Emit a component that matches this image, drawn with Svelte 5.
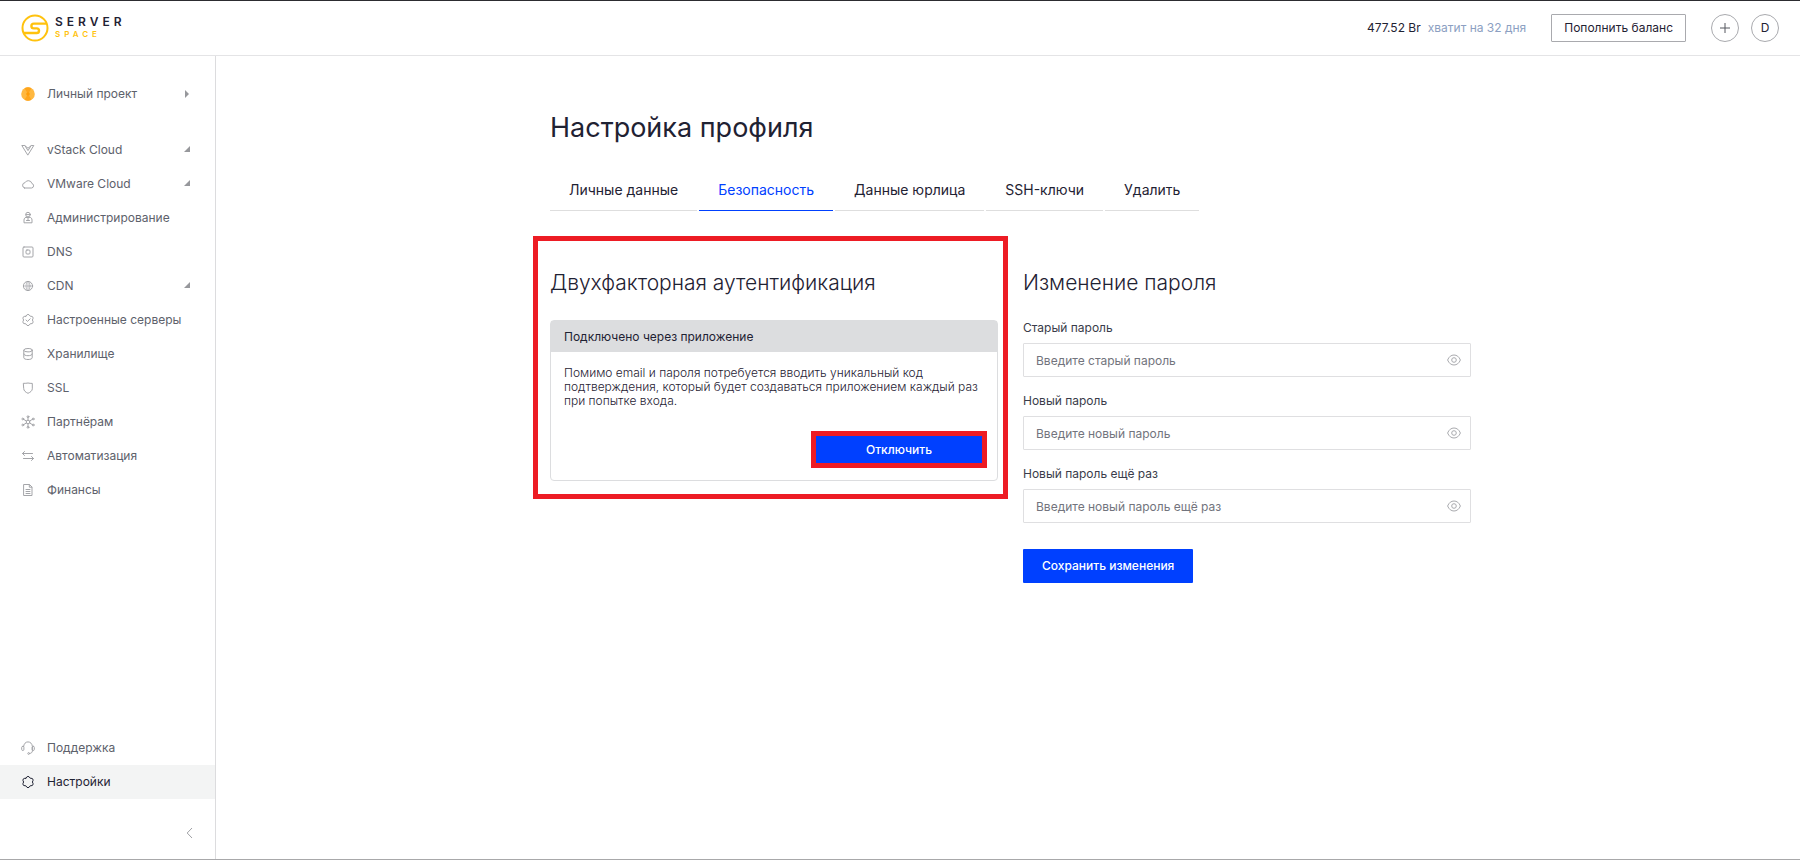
<script>
  const services = [
    { label: 'vStack Cloud', icon: 'vstack', expandable: true },
    { label: 'VMware Cloud', icon: 'cloud', expandable: true },
    { label: 'Администрирование', icon: 'admin' },
    { label: 'DNS', icon: 'dns' },
    { label: 'CDN', icon: 'globe', expandable: true },
    { label: 'Настроенные серверы', icon: 'check' },
    { label: 'Хранилище', icon: 'storage' },
    { label: 'SSL', icon: 'shield' },
    { label: 'Партнёрам', icon: 'partners' },
    { label: 'Автоматизация', icon: 'arrows' },
    { label: 'Финансы', icon: 'doc' }
  ];
  const bottomLinks = [
    { label: 'Поддержка', icon: 'headset' },
    { label: 'Настройки', icon: 'gear', active: true }
  ];
  const tabs = ['Личные данные', 'Безопасность', 'Данные юрлица', 'SSH-ключи', 'Удалить'];
  const fields = [
    { id: 'old-password', label: 'Старый пароль', placeholder: 'Введите старый пароль' },
    { id: 'new-password', label: 'Новый пароль', placeholder: 'Введите новый пароль' },
    { id: 'repeat-password', label: 'Новый пароль ещё раз', placeholder: 'Введите новый пароль ещё раз' }
  ];
  const gearPath = 'M4.8 3.2Q7-.6 9.2 3.2 13.6 3.2 11.400 7 13.600 10.800 9.200 10.800 7 14.600 4.800 10.800.4 10.800 2.600 7 .4 3.200 4.800 3.200z';
  let activeTab = $state('Безопасность');
  let visible = $state({});
</script>

{#snippet icon(name)}
  <svg class="icon" viewBox="0 0 14 14" aria-hidden="true">
    {#if name === 'vstack'}
      <path d="M1.200 2.500h2.600L7 7.600l3.200-5.100h2.600L7 11.800z" /><path d="M4 2.800l3 2.400 3-2.400" />
    {:else if name === 'cloud'}
      <path d="M3.600 11h7a2.300 2.300 0 0 0 .3-4.500A3.700 3.700 0 0 0 4 5.700 2.700 2.700 0 0 0 3.600 11z" />
    {:else if name === 'admin'}
      <circle cx="7" cy="3.600" r="2.300" /><path d="M4.900 6.400h4.200c1 0 1.900 1.200 1.900 2.600v2.800H3V9c0-1.400.9-2.600 1.900-2.600zM7 6.400v3.200M5.500 9.500h3M5 3.600h4" />
    {:else if name === 'dns'}
      <rect x="2" y="2" width="10" height="10" rx="1" /><rect x="5" y="5" width="4" height="4" rx="1" />
    {:else if name === 'globe'}
      <circle cx="7" cy="7" r="4.600" /><ellipse cx="7" cy="7" rx="2" ry="4.600" stroke-width=".7" /><path d="M2.500 7h9M7 2.500v9" stroke-width=".7" />
    {:else if name === 'check'}
      <path d={gearPath} /><path d="M5 7l1.500 1.400L9.200 5.800" />
    {:else if name === 'storage'}
      <ellipse cx="7" cy="3.200" rx="4.200" ry="1.700" /><path d="M2.800 3.200v7.600c0 1 1.900 1.700 4.200 1.700s4.200-.7 4.200-1.700V3.200M2.800 7c0 1 1.900 1.700 4.200 1.700S11.200 8 11.200 7" />
    {:else if name === 'shield'}
      <path d="M2.700 2.400c1.400.3 2.900-.4 4.300-.4s2.900.7 4.300.4v5.400c0 2-2 3.500-4.300 4.500-2.300-1-4.300-2.500-4.300-4.500z" />
    {:else if name === 'partners'}
      <circle cx="7" cy="7" r="1.800" /><path d="M7 2.500v2.700M7 8.800v2.700M5.400 6L2.500 4.300M8.600 6l2.900-1.700M5.400 8L2.500 9.700M8.600 8l2.900 1.700" />
      <circle cx="7" cy="1.700" r=".9" /><circle cx="7" cy="12.300" r=".9" /><circle cx="1.800" cy="4" r=".9" /><circle cx="12.200" cy="4" r=".9" /><circle cx="1.800" cy="10" r=".9" /><circle cx="12.200" cy="10" r=".9" />
    {:else if name === 'arrows'}
      <path d="M11.500 4.500h-10M3.500 2.500l-2 2 2 2M2.500 9.500h10M10.500 7.500l2 2-2 2" />
    {:else if name === 'doc'}
      <path d="M3 1.500h5.500L11 4v8.500H3zM8.300 1.700v2.500h2.500M5 6.500h4M5 8.500h4M5 10.500h4" />
    {:else if name === 'headset'}
      <path d="M2.600 5.500C2.900 2.700 4.600.9 7 .9s4.100 1.800 4.400 4.600v4.300c0 1.700-1.200 2.600-2.900 2.700" />
      <rect x=".7" y="5.300" width="2.200" height="4.200" rx="1.100" /><rect x="11.100" y="5.300" width="2.200" height="4.200" rx="1.100" /><circle cx="7.700" cy="12.500" r=".9" />
    {:else if name === 'gear'}
      <path d={gearPath} />
    {/if}
  </svg>
{/snippet}

<div class="page">
  <header>
    <a class="logo" href="#home" aria-label="Serverspace">
      <svg viewBox="0 0 28 28" aria-hidden="true">
        <circle cx="14" cy="14" r="12.500" />
        <path d="M25.700 9.600H12.800a2.400 2.400 0 0 0 0 4.800h2.900a2.300 2.300 0 0 1 0 4.600H2.700" stroke-width="2.400" />
      </svg>
      <span class="wordmark"><span>SERVER</span><span class="space">SPACE</span></span>
    </a>
    <div class="account">
      <span class="balance"><b>477.52 Br</b><span>хватит на 32 дня</span></span>
      <button class="topup">Пополнить баланс</button>
      <div class="rounds">
        <button class="round" aria-label="Создать">
          <svg viewBox="0 0 12 12" aria-hidden="true"><path d="M6 1v10M1 6h10" /></svg>
        </button>
        <button class="round">D</button>
      </div>
    </div>
  </header>

  <div class="body">
    <aside>
      <button class="item project">
        <svg class="coin" viewBox="0 0 14 14" aria-hidden="true">
          <circle cx="7" cy="7" r="6.800" fill="#ffb840" /><path d="M3.500 1.200L7 7l3.500-5.800a6.800 6.800 0 0 0-7 0zM3.500 12.800L7 7l3.500 5.800a6.800 6.800 0 0 1-7 0z" fill="#ffa51c" /><circle cx="7" cy="7" r="1.800" fill="#ff9c08" />
        </svg>
        <span>Личный проект</span>
        <svg class="caret" viewBox="0 0 6 8" aria-hidden="true"><path d="M1 0l4 4-4 4z" /></svg>
      </button>
      <nav class="services">
        {#each services as s}
          <a class="item" href="#{s.icon}">
            {@render icon(s.icon)}
            <span>{s.label}</span>
            {#if s.expandable}
              <svg class="caret" viewBox="0 0 6 8" aria-hidden="true"><path d="M6 0v6H0z" /></svg>
            {/if}
          </a>
        {/each}
      </nav>
      <nav class="bottom">
        {#each bottomLinks as s}
          <a class="item" class:active={s.active} href="#{s.icon}">
            {@render icon(s.icon)}
            <span>{s.label}</span>
          </a>
        {/each}
      </nav>
      <button class="collapse" aria-label="Свернуть меню">
        <svg viewBox="0 0 6 12" aria-hidden="true"><path d="M5.500 1L.7 6l4.800 5" /></svg>
      </button>
    </aside>

    <main>
      <div class="content">
        <h1>Настройка профиля</h1>
        <div class="tabs" role="tablist">
          {#each tabs as t}
            <button role="tab" aria-selected={t === activeTab} class:current={t === activeTab} onclick={() => (activeTab = t)}>{t}</button>
          {/each}
        </div>
        <div class="columns">
          <section class="twofactor">
            <h2>Двухфакторная аутентификация</h2>
            <div class="card">
              <h3>Подключено через приложение</h3>
              <div class="card-body">
                <p>Помимо email и пароля потребуется вводить уникальный код подтверждения, который будет создаваться приложением каждый раз при попытке входа.</p>
                <button class="disable">Отключить</button>
              </div>
            </div>
          </section>
          <section>
            <h2>Изменение пароля</h2>
            <form onsubmit={(e) => e.preventDefault()}>
              {#each fields as f}
                <div class="field">
                  <label for={f.id}>{f.label}</label>
                  <div class="box">
                    <input id={f.id} type={visible[f.id] ? 'text' : 'password'} placeholder={f.placeholder} />
                    <button type="button" aria-label="Показать пароль" onclick={() => (visible[f.id] = !visible[f.id])}>
                      <svg viewBox="0 0 14 12" aria-hidden="true"><path d="M.6 6C2 2.700 4.200 1 7 1s5 1.700 6.400 5C12 9.300 9.800 11 7 11S2 9.300.6 6z" /><circle cx="7" cy="6" r="2.300" /></svg>
                    </button>
                  </div>
                </div>
              {/each}
              <button class="save">Сохранить изменения</button>
            </form>
          </section>
        </div>
      </div>
    </main>
  </div>
</div>

<style>
  :global(body) { margin: 0; background: #fff; }
  .page {
    box-sizing: border-box;
    min-height: 100vh;
    display: flex;
    flex-direction: column;
    border-top: 1px solid #2c2c30;
    border-bottom: 1px solid #a8a8aa;
    font-family: Inter, "Liberation Sans", sans-serif;
    font-size: 12px;
    line-height: 16px;
    color: #1f2233;
  }
  button { font: inherit; color: inherit; background: none; border: 0; padding: 0; margin: 0; cursor: pointer; }
  a { color: inherit; text-decoration: none; }
  svg { fill: none; stroke: currentColor; flex: none; display: block; }

  header {
    display: flex;
    justify-content: space-between;
    align-items: center;
    height: 54px;
    padding: 0 21px;
    border-bottom: 1px solid #e4e4e6;
  }
  .logo { display: flex; align-items: center; gap: 6px; }
  .logo svg { width: 28px; height: 28px; color: #ffc20e; stroke-width: 2; }
  .wordmark { display: flex; flex-direction: column; font-weight: 600; font-size: 12px; line-height: 12px; letter-spacing: 4px; }
  .space { font-size: 8px; color: #ffc20e; }
  .account { display: flex; align-items: center; }
  .balance { display: flex; gap: 7px; color: #8c9fc2; }
  .balance b { font-weight: 400; color: #1f2233; }
  .topup { height: 28px; padding: 0 12px; margin: 0 25px; border: 1px solid #a9aaae; border-radius: 1px; }
  .rounds { display: flex; gap: 12px; }
  .round { box-sizing: border-box; width: 28px; height: 28px; border: 1px solid #a9aaae; border-radius: 50%; display: flex; align-items: center; justify-content: center; }
  .round svg { width: 12px; height: 12px; stroke: #55565e; }

  .body { flex: 1; display: flex; }
  aside { width: 215px; flex: none; display: flex; flex-direction: column; border-right: 1px solid #dcdcde; color: #5d616b; }
  .item { display: flex; align-items: center; gap: 12px; width: 100%; height: 34px; box-sizing: border-box; padding: 0 25px 0 21px; text-align: left; }
  .item .icon, .coin { width: 14px; height: 14px; }
  .icon { color: #a4a5a9; stroke-width: 1; stroke-linejoin: round; stroke-linecap: round; }
  .coin { stroke: none; }
  .caret { width: 6px; height: 8px; margin-left: auto; fill: #97989c; stroke: none; }
  .project { margin-top: 21px; }
  .services { margin-top: 22px; }
  .bottom { margin-top: auto; }
  .active { background: #f3f4f4; color: #1f2233; }
  .active .icon { color: #1f2233; }
  .collapse { align-self: flex-end; margin: 28px 22px 20px 0; }
  .collapse svg { width: 7px; height: 12px; stroke: #a0a1a5; }

  main { flex: 1; display: flex; justify-content: center; padding: 53px 20px 20px 25px; }
  .content { width: 100%; max-width: 921px; }
  h1 { margin: 0; font-size: 27px; line-height: 38px; font-weight: 400; }
  .tabs { display: flex; gap: 2px; margin-top: 28px; }
  .tabs button { height: 36px; padding: 0 19px 5px; font-size: 14px; border-bottom: 1px solid #dedede; }
  .tabs .current { color: #0040ff; border-color: #0040ff; }
  .columns { display: grid; grid-template-columns: 1fr 1fr; gap: 25px; margin-top: 58px; align-items: start; }
  h2 { margin: 0; font-size: 21px; line-height: 28px; font-weight: 300; }
  .twofactor { position: relative; }
  .twofactor::after { content: ""; position: absolute; inset: -33px -10px -18px -17px; border: 5px solid #ed1c24; pointer-events: none; }
  .card { margin-top: 23px; border: 1px solid #dcdddf; border-radius: 4px; }
  h3 { margin: 0; padding: 8px 13px 7px; background: #dcdddf; font-size: 12px; line-height: 16px; font-weight: 400; }
  .card-body { display: flex; flex-direction: column; padding: 14px 13px 12px; }
  p { margin: 0; line-height: 14px; font-weight: 300; }
  .disable { align-self: flex-end; width: 176px; height: 37px; margin-top: 23px; margin-right: -3px; border: 5px solid #ed1c24; background: #0040ff; color: #fff; font-weight: 500; }
  form { display: flex; flex-direction: column; align-items: stretch; gap: 16px; margin-top: 23px; }
  .field { display: flex; flex-direction: column; gap: 7px; }
  .field label { color: #3a3c4a; }
  .box { display: flex; align-items: center; border: 1px solid #dfdfe1; border-radius: 1px; }
  input { flex: 1; min-width: 0; height: 32px; padding: 0 12px; border: 0; outline: 0; background: none; font: inherit; box-sizing: border-box; }
  input::placeholder { color: #72747d; opacity: 1; }
  .box button { padding: 0 9px; }
  .box svg { width: 14px; height: 12px; color: #a9aaae; }
  .save { align-self: flex-start; height: 34px; padding: 0 19px; margin-top: 10px; background: #0040ff; color: #fff; font-weight: 500; border-radius: 1px; }
</style>
